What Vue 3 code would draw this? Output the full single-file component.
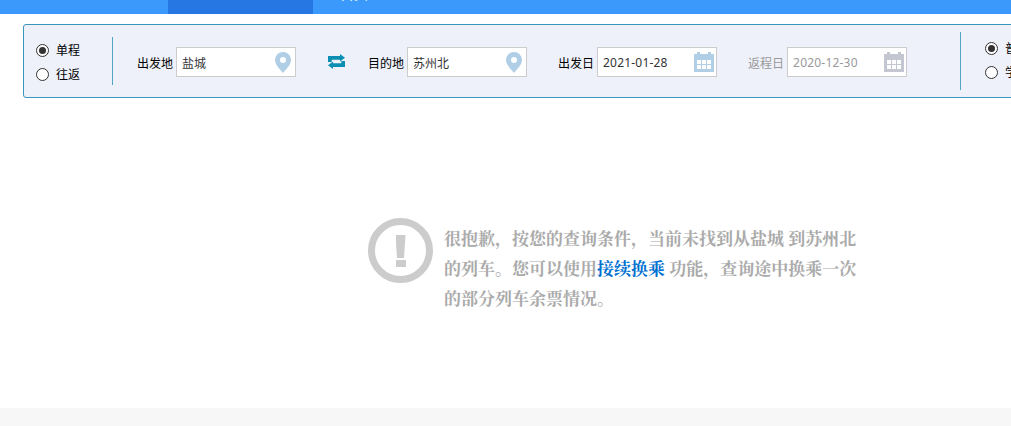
<script setup>
const stations = [
  { label: '出发地', value: '盐城' },
  { label: '目的地', value: '苏州北' },
]
</script>

<template>
  <div class="page">
    <header class="topbar">
      <div class="tab-gap"></div>
      <div class="tab-active"></div>
      <div class="tab-text">首页</div>
    </header>

    <section class="search">
      <div class="radios trip">
        <label class="radio"><span class="dot on"></span>单程</label>
        <label class="radio"><span class="dot"></span>往返</label>
      </div>
      <div class="divider first"></div>

      <div class="field from">
        <span class="label">{{ stations[0].label }}</span>
        <div class="input">
          <span class="val">{{ stations[0].value }}</span>
          <svg class="pin" viewBox="0 0 16 21"><path fill="#b0cfe6" fill-rule="evenodd" d="M8 0a8 8 0 0 1 8 8c0 5-5 9-8 13C5 17 0 13 0 8a8 8 0 0 1 8-8zm0 5a3 3 0 1 0 0 6 3 3 0 0 0 0-6z"/></svg>
        </div>
      </div>

      <svg class="swap" viewBox="0 0 17 15">
        <path fill="#0a8fb3" d="M12 0l5 3.700-5 3.800V5.700H3.700V8H0V2h12zM5 15L0 11.300 5 7.500v1.800h8.300V7H17v6H5z"/>
      </svg>

      <div class="field to">
        <span class="label">{{ stations[1].label }}</span>
        <div class="input">
          <span class="val">{{ stations[1].value }}</span>
          <svg class="pin" viewBox="0 0 16 21"><path fill="#b0cfe6" fill-rule="evenodd" d="M8 0a8 8 0 0 1 8 8c0 5-5 9-8 13C5 17 0 13 0 8a8 8 0 0 1 8-8zm0 5a3 3 0 1 0 0 6 3 3 0 0 0 0-6z"/></svg>
        </div>
      </div>

      <div class="field depart">
        <span class="label">出发日</span>
        <div class="input">
          <span class="val date">2021-01-28</span>
          <svg class="cal" viewBox="0 0 20 20"><path fill="#b0cfe6" fill-rule="evenodd" d="M3 0h3v2h8V0h3v2h3v18H0V2h3zM3 8v4h4V8zm5 0v4h4V8zm5 0v4h4V8zM3 13v4h4v-4zm5 0v4h4v-4zm5 0v4h4v-4z"/></svg>
        </div>
      </div>

      <div class="field back">
        <span class="label muted">返程日</span>
        <div class="input">
          <span class="val date muted-val">2020-12-30</span>
          <svg class="cal" viewBox="0 0 20 20"><path fill="#c4c6d2" fill-rule="evenodd" d="M3 0h3v2h8V0h3v2h3v18H0V2h3zM3 8v4h4V8zm5 0v4h4V8zm5 0v4h4V8zM3 13v4h4v-4zm5 0v4h4v-4zm5 0v4h4v-4z"/></svg>
        </div>
      </div>

      <div class="divider last"></div>
      <div class="radios kind">
        <label class="radio"><span class="dot on"></span>普通</label>
        <label class="radio"><span class="dot"></span>学生</label>
      </div>
    </section>

    <main class="notice">
      <div class="alert"><span class="alert-bar"></span><span class="alert-dot"></span></div>
      <p class="msg">很抱歉，按您的查询条件，当前未找到从盐城 到苏州北 的列车。您可以使用<a class="link">接续换乘</a> 功能，查询途中换乘一次的部分列车余票情况。</p>
    </main>

    <footer class="foot"></footer>
  </div>
</template>

<style>
html, body { margin: 0; background: #fff; overflow: hidden; }
</style>

<style scoped>
.page {
  width: 1011px;
  height: 426px;
  overflow: hidden;
  display: flex;
  flex-direction: column;
  font-family: "Noto Sans CJK SC", "Liberation Sans", sans-serif;
  font-size: 12px;
  color: #000;
}
.topbar { height: 14px; flex: none; background: #3b99fc; display: flex; overflow: hidden; }
.tab-gap { width: 168px; }
.tab-active { width: 145px; background: #2676e3; }
.tab-text { margin: -15px 0 0 27px; color: #fff; font-size: 14px; line-height: 16px; width: 60px; }
.search {
  flex: none;
  box-sizing: border-box;
  width: 1100px;
  height: 74px;
  margin: 10px 0 0 23px;
  background: #eef1f9;
  border: 1px solid #3a95bb;
  border-radius: 3px;
  display: flex;
  align-items: center;
}
.radios { display: flex; flex-direction: column; gap: 8px; }
.trip { margin: 2px 0 0 12px; width: 76px; }
.kind { margin: 0 0 2px 24px; }
.radio { display: flex; align-items: center; gap: 7px; height: 16px; line-height: 16px; }
.dot { width: 11px; height: 11px; border: 1px solid #333; border-radius: 50%; background: #fff; box-sizing: content-box; position: relative; }
.dot.on::after { content: ""; position: absolute; inset: 2px; border-radius: 50%; background: #333; }
.divider { width: 1px; background: #52a5c4; flex: none; }
.first { height: 48px; }
.last { height: 58px; margin-left: 53px; }
.field { display: flex; align-items: center; gap: 3px; margin-top: 2px; }
.from { margin-left: 24px; }
.to { margin-left: 23px; }
.depart { margin-left: 31px; }
.back { margin-left: 31px; }
.label { white-space: nowrap; }
.muted { color: #999; }
.input {
  box-sizing: border-box;
  width: 120px;
  height: 30px;
  background: #fff;
  border: 1px solid #ccc;
  display: flex;
  align-items: center;
  justify-content: space-between;
  padding: 0 4px 0 5px;
}
.val { color: #333; font-size: 12px; }
.date { font-family: "Noto Sans", "Liberation Sans", sans-serif; letter-spacing: 0.2px; }
.muted-val { color: #999; }
.pin { width: 16px; height: 21px; }
.cal { width: 20px; height: 20px; margin-right: -2px; }
.swap { width: 17px; height: 15px; margin: 1px 0 0 32px; flex: none; }
.notice { flex: 1; display: flex; align-items: flex-start; padding: 120px 0 0 368px; min-height: 0; }
.alert {
  box-sizing: border-box;
  width: 65px;
  height: 65px;
  border: 7px solid #ccc;
  border-radius: 50%;
  flex: none;
  display: flex;
  flex-direction: column;
  align-items: center;
  padding-top: 10px;
  gap: 2px;
}
.alert-bar { width: 10px; height: 23px; background: #ccc; clip-path: polygon(0 0, 100% 0, 85% 100%, 15% 100%); }
.alert-dot { width: 10px; height: 7px; background: #ccc; }
.msg {
  margin: 5px 0 0 11px;
  width: 416px;
  font-family: "Noto Serif CJK SC", "Noto Sans CJK SC", serif;
  font-size: 17px;
  font-weight: 700;
  line-height: 30px;
  color: #aaa;
}
.link { color: #0070d0; }
.foot { height: 18px; flex: none; background: #f7f7f7; }
</style>
